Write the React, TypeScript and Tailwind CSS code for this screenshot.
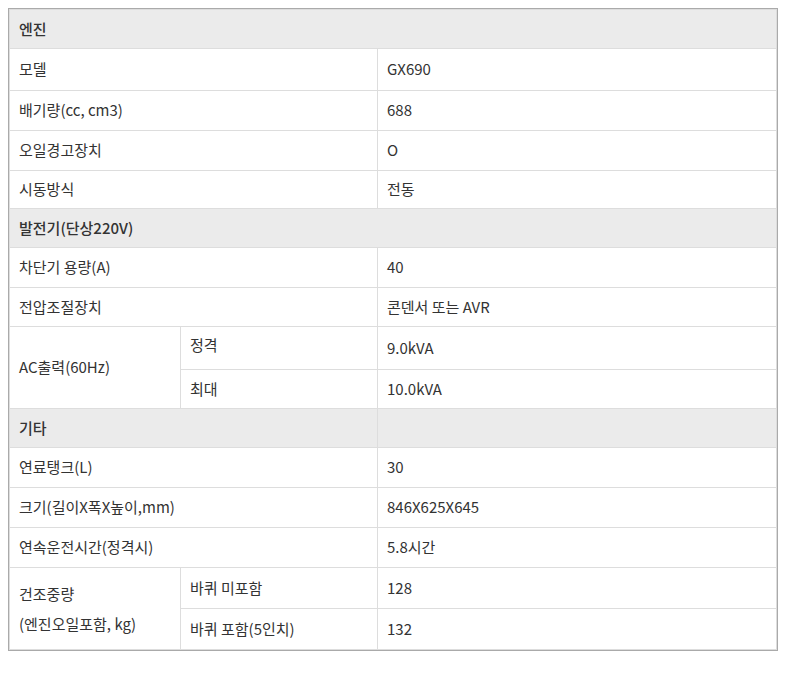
export default function App() {
  const f = { fontFamily: '"Noto Sans CJK KR", "Noto Sans", sans-serif' };
  const td = "border border-[#dddddd] px-[9px] align-middle";
  const H = ({ t, split }: { t: string; split?: boolean }) =>
    split ? (
      <tr className="h-[39px] bg-[#ebebeb]">
        <td colSpan={2} className={`${td} font-medium`}>{t}</td>
        <td className={td}></td>
      </tr>
    ) : (
      <tr className="h-[39px] bg-[#ebebeb]">
        <td colSpan={3} className={`${td} font-medium`}>{t}</td>
      </tr>
    );
  const R = ({ a, b, h = "h-[40px]" }: { a: string; b: string; h?: string }) => (
    <tr className={h}>
      <td colSpan={2} className={td}>{a}</td>
      <td className={td}>{b}</td>
    </tr>
  );
  return (
    <div className="bg-white w-[785px] h-[678px] pt-[9px] pl-[9px]" style={f}>
      <table className="w-[768px] border-collapse border border-[#aaaaaa] text-[15px] text-[#333] table-fixed outline outline-1 outline-[#aaaaaa]">
        <colgroup>
          <col className="w-[171px]" />
          <col className="w-[197px]" />
          <col />
        </colgroup>
        <tbody>
          <H t="엔진" />
          <R a="모델" b="GX690" h="h-[42px]" />
          <R a="배기량(cc, cm3)" b="688" />
          <R a="오일경고장치" b="O" />
          <R a="시동방식" b="전동" h="h-[38px]" />
          <H t="발전기(단상220V)" />
          <R a="차단기 용량(A)" b="40" />
          <R a="전압조절장치" b="콘덴서 또는 AVR" h="h-[39px]" />
          <tr className="h-[43px]">
            <td rowSpan={2} className={td}>AC출력(60Hz)</td>
            <td className={`${td} pb-[6px]`}>정격</td>
            <td className={td}>9.0kVA</td>
          </tr>
          <tr className="h-[39px]">
            <td className={td}>최대</td>
            <td className={td}>10.0kVA</td>
          </tr>
          <H t="기타" split />
          <R a="연료탱크(L)" b="30" />
          <R a="크기(길이X폭X높이,mm)" b="846X625X645" />
          <R a="연속운전시간(정격시)" b="5.8시간" />
          <tr className="h-[41px]">
            <td rowSpan={2} className={`${td} leading-[30px]`}>건조중량<br />(엔진오일포함, kg)</td>
            <td className={td}>바퀴 미포함</td>
            <td className={td}>128</td>
          </tr>
          <tr className="h-[41px]">
            <td className={td}>바퀴 포함(5인치)</td>
            <td className={td}>132</td>
          </tr>
        </tbody>
      </table>
    </div>
  );
}
